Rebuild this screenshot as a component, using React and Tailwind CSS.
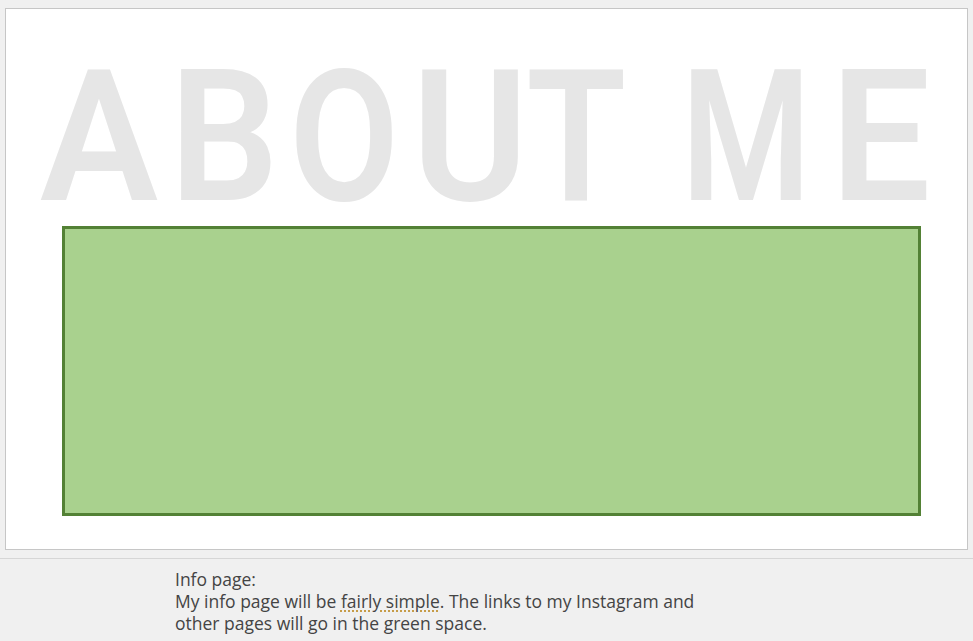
import React from 'react';

// each slot matches the letter's ink box in the slide
const letters = [
  { ch: 'A', cls: 'w-[118px]', inner: 'scale-x-[0.97]' },
  { ch: 'B', cls: 'w-[96px] ml-[18px]', inner: 'scale-x-[0.94]' },
  { ch: 'O', cls: 'w-[97px] ml-[24px]', inner: 'scale-x-[0.87]' },
  { ch: 'U', cls: 'w-[100px] ml-[27px]', inner: 'scale-x-[0.97]' },
  { ch: 'T', cls: 'w-[98px] ml-[7px]', inner: 'scale-x-[0.89]' },
  { ch: 'M', cls: 'w-[117px] ml-[63px]', inner: 'scale-x-[0.81]' },
  { ch: 'E', cls: 'w-[88px] ml-[32px]', inner: 'scale-x-[0.97]' },
];

function App() {
  return (
    <div className="w-[973px] h-[641px] bg-[#f0f0f0] overflow-hidden flex flex-col">
      {/* Slide */}
      <div className="pt-[8px] pl-[5px]">
        <div className="w-[963px] h-[542px] bg-white border border-[#c6c6c6] flex flex-col">
          <h1
            className="mt-[39px] ml-[34px] h-[174px] leading-[180px] text-[183px] font-semibold text-[#e6e6e6] whitespace-nowrap flex"
            style={{ fontFamily: 'Roboto, sans-serif' }}
          >
            {letters.map((l, i) => (
              <span key={i} className={`${l.cls} shrink-0 flex justify-center`}>
                <span className={`inline-block shrink-0 ${l.inner}`}>{l.ch}</span>
              </span>
            ))}
          </h1>
          <div className="mt-[4px] ml-[56px] w-[859px] h-[290px] bg-[#a9d18e] border-[3px] border-[#538135]" />
        </div>
      </div>

      {/* Notes */}
      <div className="mt-[8px] border-t border-[#d6d6d6] flex-1">
        <div
          className="pl-[175px] pt-[9px] text-[17.5px] leading-[22px] text-[#444444]"
          style={{ fontFamily: '"Open Sans", sans-serif' }}
        >
          <div>Info page:</div>
          <div>
            My info page will be{' '}
            <span className="underline decoration-dotted decoration-[#c09030] underline-offset-[3px]">fairly simple</span>
            . The links to my Instagram and
          </div>
          <div>other pages will go in the green space.</div>
        </div>
      </div>
    </div>
  );
}

export default App;
